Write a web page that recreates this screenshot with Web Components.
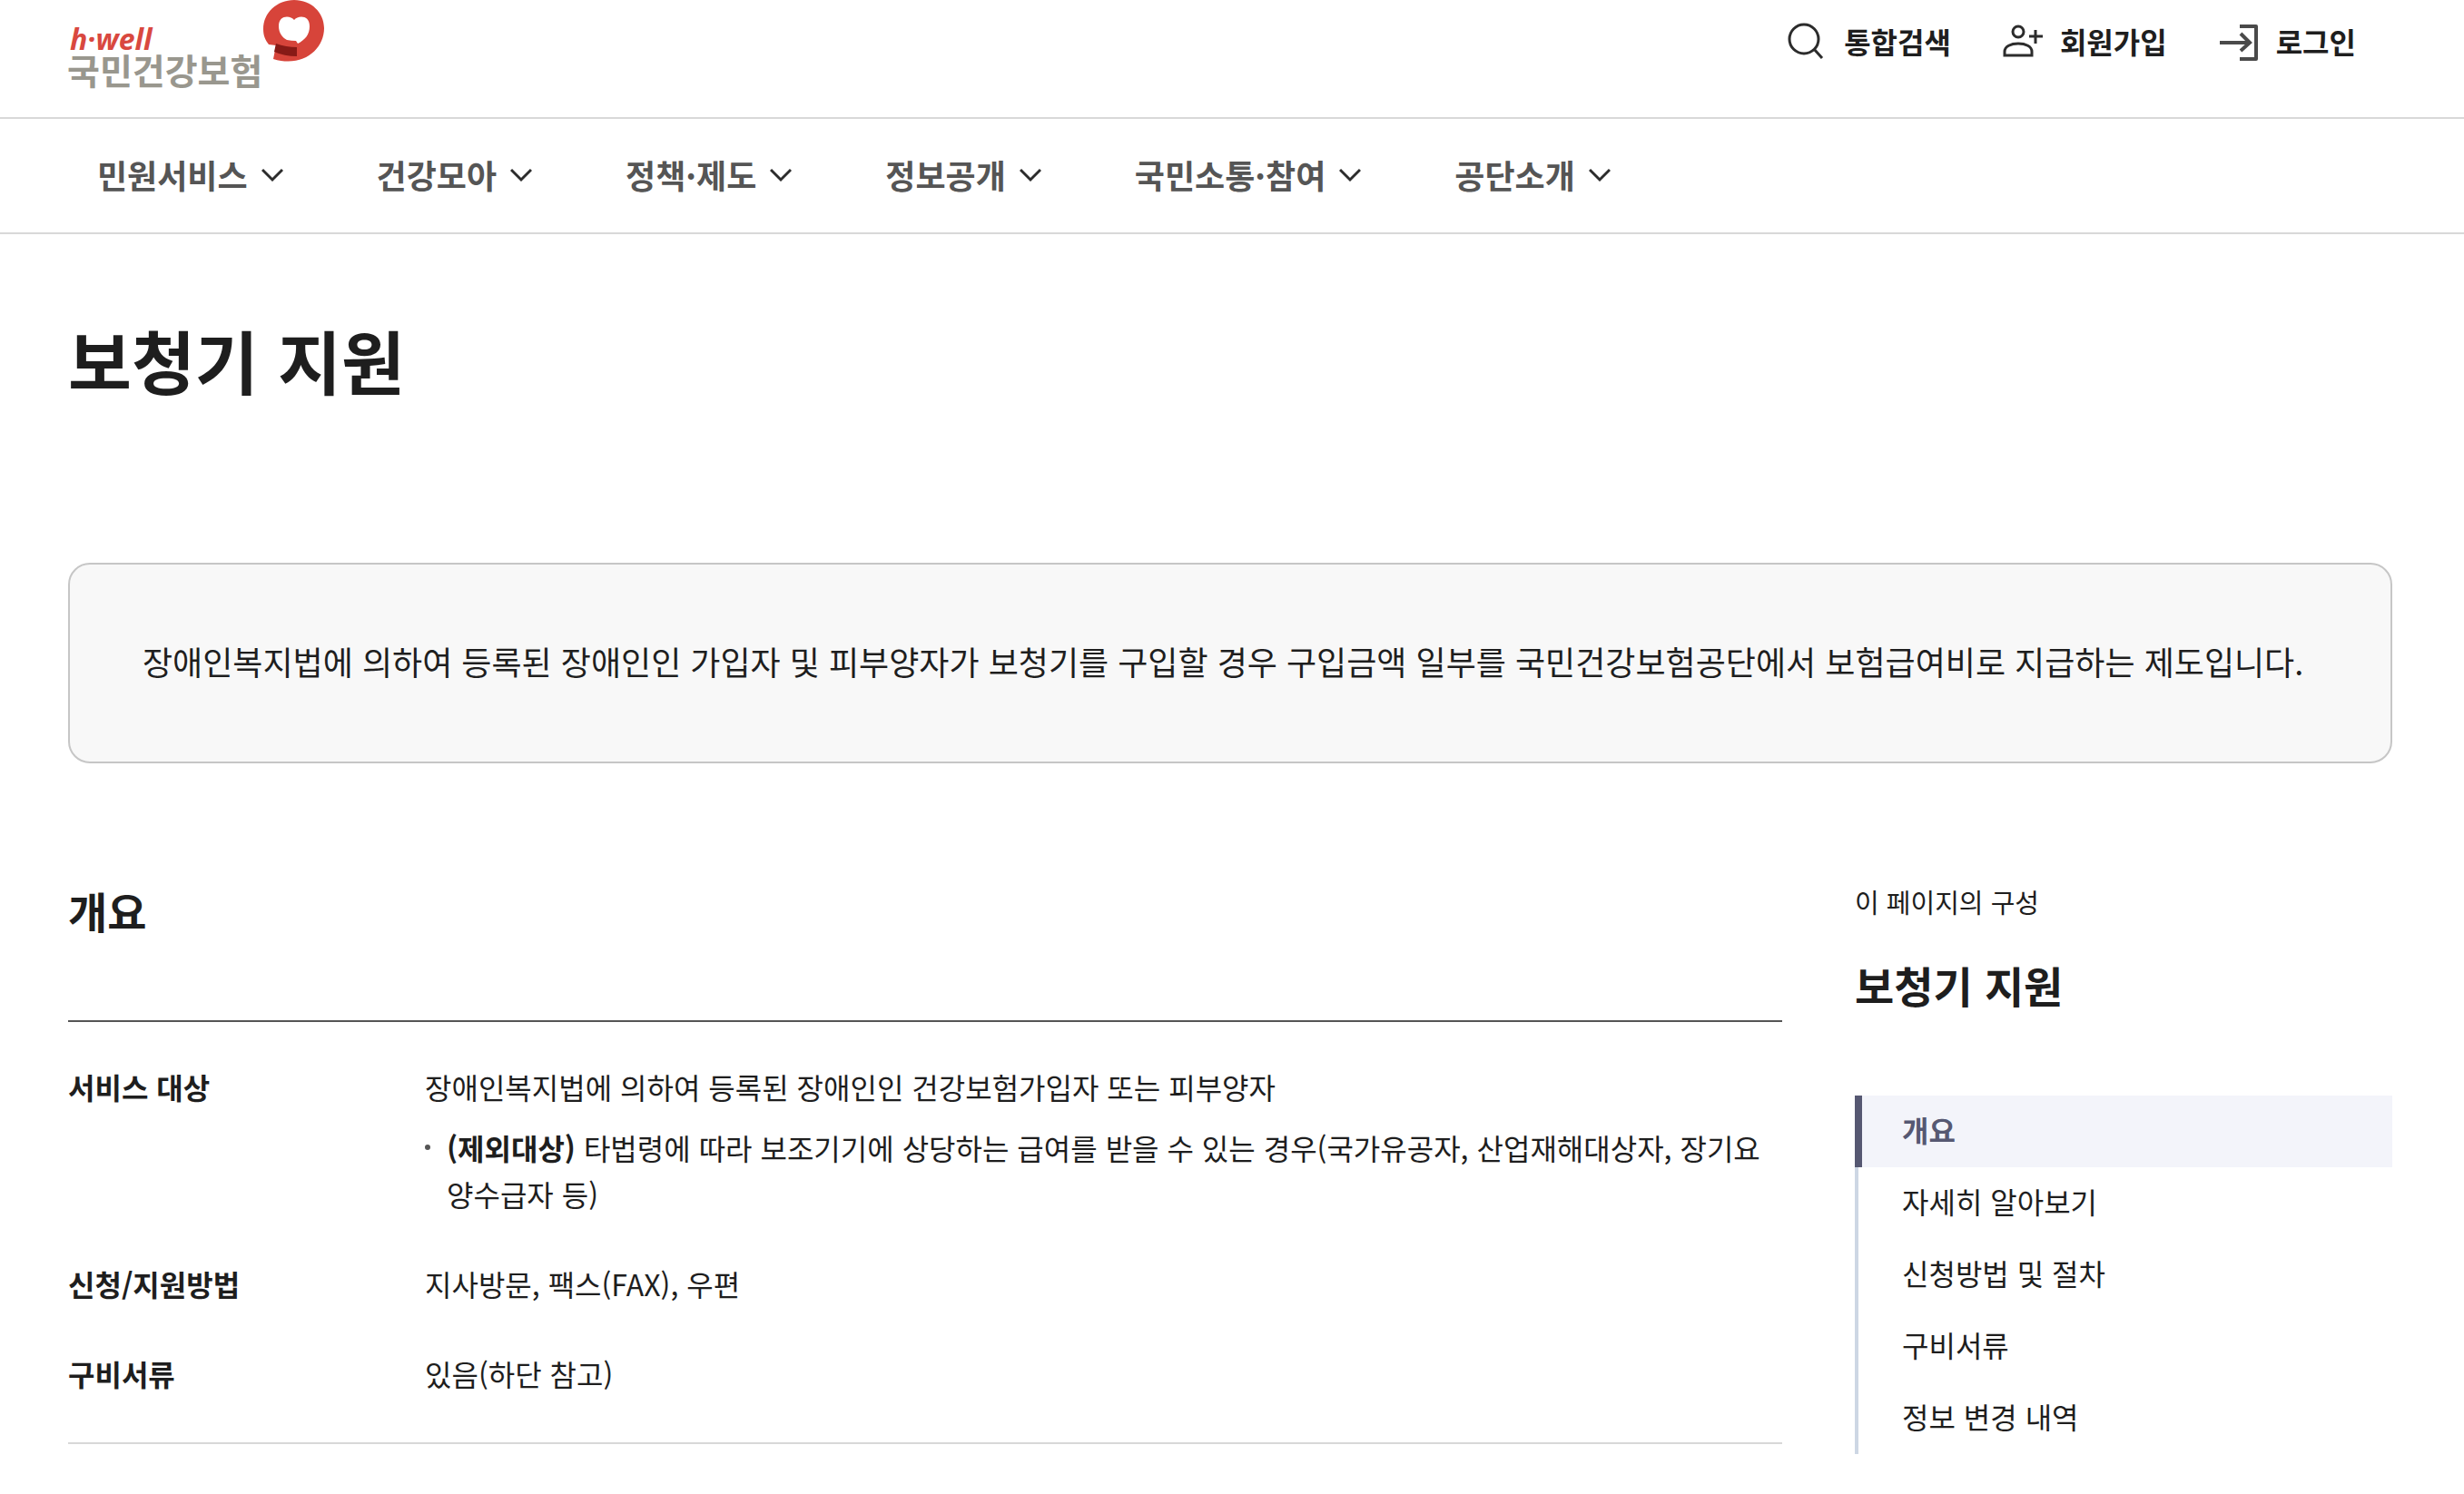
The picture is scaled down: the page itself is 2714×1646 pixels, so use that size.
<!DOCTYPE html>
<html lang="ko">
<head>
<meta charset="UTF-8">
<meta name="viewport" content="width=device-width, initial-scale=1">
<title>보청기 지원 | 국민건강보험</title>
<style>
:root {
  --text: #1e1e1e;
  --text-soft: #555555;
  --line: #d8d8d8;
  --box-line: #c6c6c6;
  --box: #f8f8f8;
  --accent: #565872;
  --accent-bg: #f3f4fa;
  --rail: #cdd7e4;
}
body {
  margin: 0;
  font-family: "Noto Sans CJK KR", sans-serif;
  font-size: 32px;
  line-height: 51px;
  color: var(--text);
  background: #fff;
}
</style>
</head>
<body>
<site-header>
  <util-link icon="search">통합검색</util-link>
  <util-link icon="join">회원가입</util-link>
  <util-link icon="login">로그인</util-link>
</site-header>

<main-nav>
  <nav-item>민원서비스</nav-item>
  <nav-item>건강모아</nav-item>
  <nav-item>정책·제도</nav-item>
  <nav-item>정보공개</nav-item>
  <nav-item>국민소통·참여</nav-item>
  <nav-item>공단소개</nav-item>
</main-nav>

<page-body>
  <span slot="title">보청기 지원</span>
  <notice-box slot="notice">장애인복지법에 의하여 등록된 장애인인 가입자 및 피부양자가 보청기를 구입할 경우 구입금액 일부를 국민건강보험공단에서 보험급여비로 지급하는 제도입니다.</notice-box>

  <info-section heading="개요">
    <info-row label="서비스 대상">
      장애인복지법에 의하여 등록된 장애인인 건강보험가입자 또는 피부양자
      <bullet-note slot="note"><b>(제외대상)</b> 타법령에 따라 보조기기에 상당하는 급여를 받을 수 있는 경우(국가유공자, 산업재해대상자, 장기요양수급자 등)</bullet-note>
    </info-row>
    <info-row label="신청/지원방법">지사방문, 팩스(FAX), 우편</info-row>
    <info-row label="구비서류">있음(하단 참고)</info-row>
  </info-section>

  <page-toc slot="side" heading="보청기 지원">
    <toc-item active>개요</toc-item>
    <toc-item>자세히 알아보기</toc-item>
    <toc-item>신청방법 및 절차</toc-item>
    <toc-item>구비서류</toc-item>
    <toc-item>정보 변경 내역</toc-item>
  </page-toc>
</page-body>

<script>
// Attach an open shadow root and fill it
class BaseElement extends HTMLElement {
  constructor() {
    super()
    const template = document.createElement('template')
    template.innerHTML = this.render()
    this.attachShadow({ mode: 'open' })
    this.shadowRoot.appendChild(template.content.cloneNode(true))
  }
}

/* Header */
class SiteHeader extends BaseElement {
  render() {
    return `<style>
:host {
  display: block;
  border-bottom: 2px solid var(--line);
}
header {
  display: flex;
  justify-content: space-between;
  align-items: flex-start;
  padding: 0 119px 0 73px;
}
.logo {
  display: block;
  height: 129px;
}
.logo svg {
  display: block;
}
.util {
  display: flex;
  gap: 56px;
  padding-top: 20px;
}
</style>
<header>
  <a class="logo" href="#" aria-label="국민건강보험">
    <svg width="286" height="104" viewBox="0 0 286 104">
      <text x="4" y="55" font-family="Open Sans, sans-serif" font-size="32" font-weight="700" font-style="italic" fill="#d9483f">h·well</text>
      <text x="1" y="93" font-family="Noto Sans CJK KR, sans-serif" font-size="39" font-weight="700" fill="#99978e">국민건강보험</text>
      <path d="M251 0C232 0 217 14 217 32C217 39 219 44 223 49L231 50L228 65C261 75 284 54 284 31C284 14 270 0 251 0Z" fill="#d7443a"/>
      <path d="M231 48Q242 52 254 52V62Q240 62 229 57Z" fill="#871a16"/>
      <path d="M251 22C247 17 234 16 234 29C234 37 239 42 243 44Q248 45 253 45L255 48C263 44 268 38 268 29C268 16 255 17 251 22Z" fill="#fff"/>
    </svg>
  </a>
  <div class="util"><slot></slot></div>
</header>`
  }
}

const icons = {
  search: `<circle cx="20" cy="20" r="16"/><path d="M31 31L40 41"/>`,
  join: `<circle cx="18" cy="12" r="6"/><path d="M3 38V34C3 28 10 25 18 25S33 28 33 34V38Z"/><path d="M37 10V25M30 17H45"/>`,
  login: `<g stroke="#4a4a4a" stroke-width="4"><path d="M24 6H42V42H24" stroke-linejoin="round"/><path d="M2 24H35M25 14L35 24L25 33"/></g>`
}

class UtilLink extends BaseElement {
  render() {
    return `<style>
:host {
  display: block;
}
a {
  display: flex;
  align-items: center;
  gap: 18px;
  font-size: 32px;
  font-weight: 700;
  color: var(--text);
  text-decoration: none;
}
svg {
  display: block;
  fill: none;
  stroke: #2c2c2c;
  stroke-width: 3;
}
</style>
<a href="#"><svg width="46" height="46" viewBox="0 0 46 46" aria-hidden="true">${icons[this.getAttribute('icon')]}</svg><slot></slot></a>`
  }
}

/* Main menu */
class MainNav extends BaseElement {
  render() {
    return `<style>
:host {
  display: block;
  border-bottom: 2px solid var(--line);
}
nav {
  display: flex;
  gap: 103px;
  padding: 35px 107px 37px;
}
</style>
<nav><slot></slot></nav>`
  }
}

class NavItem extends BaseElement {
  render() {
    return `<style>
:host {
  display: block;
}
button {
  display: flex;
  align-items: center;
  gap: 15px;
  padding: 0;
  border: 0;
  background: none;
  font: inherit;
  font-size: 36px;
  line-height: 53px;
  font-weight: 700;
  color: var(--text-soft);
  cursor: pointer;
}
svg {
  fill: none;
  stroke: #2c2c2c;
  stroke-width: 3;
}
</style>
<button type="button" aria-expanded="false"><slot></slot><svg width="24" height="16" viewBox="0 0 24 16" aria-hidden="true"><path d="M1 2L12 13L23 2"/></svg></button>`
  }
}

/* Content */
class PageBody extends BaseElement {
  render() {
    return `<style>
:host {
  display: block;
}
main {
  padding: 81px 79px 40px 75px;
}
h1 {
  margin: 0 0 167px;
  font-size: 76px;
  line-height: 114px;
  font-weight: 700;
}
.columns {
  display: flex;
  align-items: flex-start;
  gap: 80px;
  margin-top: 126px;
}
.content {
  flex: 1;
  min-width: 0;
}
aside {
  flex: 0 0 592px;
}
</style>
<main>
  <h1><slot name="title"></slot></h1>
  <slot name="notice"></slot>
  <div class="columns">
    <div class="content"><slot></slot></div>
    <aside><slot name="side"></slot></aside>
  </div>
</main>`
  }
}

class NoticeBox extends BaseElement {
  render() {
    return `<style>
:host {
  display: block;
  padding: 78px 80px 82px;
  border: 2px solid var(--box-line);
  border-radius: 24px;
  background: var(--box);
  font-size: 36px;
  line-height: 57px;
}
p {
  margin: 0;
}
</style>
<p><slot></slot></p>`
  }
}

class InfoSection extends BaseElement {
  render() {
    return `<style>
:host {
  display: block;
}
h2 {
  margin: 0 0 85px;
  font-size: 47px;
  line-height: 72px;
  font-weight: 700;
}
.rows {
  display: flex;
  flex-direction: column;
  gap: 48px;
  padding: 46px 0 50px;
  border-top: 2px solid var(--text-soft);
  border-bottom: 2px solid var(--line);
}
</style>
<h2>${this.getAttribute('heading')}</h2>
<div class="rows"><slot></slot></div>`
  }
}

class InfoRow extends BaseElement {
  render() {
    return `<style>
:host {
  display: block;
}
dl {
  display: flex;
  margin: 0;
}
dt {
  flex: 0 0 393px;
  font-weight: 700;
}
dd {
  flex: 1;
  margin: 0;
}
</style>
<dl>
  <dt>${this.getAttribute('label')}</dt>
  <dd><slot></slot><slot name="note"></slot></dd>
</dl>`
  }
}

class BulletNote extends BaseElement {
  render() {
    return `<style>
:host {
  display: flex;
  margin-top: 16px;
}
:host::before {
  content: "";
  flex: none;
  width: 6px;
  height: 6px;
  margin: 22px 18px 0 0;
  border-radius: 50%;
  background: var(--text-soft);
}
</style>
<div><slot></slot></div>`
  }
}

/* Side contents */
class PageToc extends BaseElement {
  render() {
    return `<style>
:host {
  display: block;
}
p {
  margin: 0;
  padding-top: 4px;
  font-size: 29px;
  line-height: 44px;
}
h2 {
  margin: 34px 0 86px;
  font-size: 47px;
  line-height: 72px;
  font-weight: 700;
}
nav {
  display: flex;
  flex-direction: column;
}
</style>
<p>이 페이지의 구성</p>
<h2>${this.getAttribute('heading')}</h2>
<nav><slot></slot></nav>`
  }
}

class TocItem extends BaseElement {
  render() {
    return `<style>
:host {
  display: block;
}
a {
  display: block;
  padding: 12px 16px 16px 48px;
  border-left: 4px solid var(--rail);
  color: var(--text);
  text-decoration: none;
}
:host([active]) a {
  padding-left: 44px;
  border-left: 8px solid var(--accent);
  background: var(--accent-bg);
  font-weight: 700;
  color: var(--accent);
}
</style>
<a href="#"><slot></slot></a>`
  }
}

window.customElements.define('site-header', SiteHeader)
window.customElements.define('util-link', UtilLink)
window.customElements.define('main-nav', MainNav)
window.customElements.define('nav-item', NavItem)
window.customElements.define('page-body', PageBody)
window.customElements.define('notice-box', NoticeBox)
window.customElements.define('info-section', InfoSection)
window.customElements.define('info-row', InfoRow)
window.customElements.define('bullet-note', BulletNote)
window.customElements.define('page-toc', PageToc)
window.customElements.define('toc-item', TocItem)
</script>
</body>
</html>
